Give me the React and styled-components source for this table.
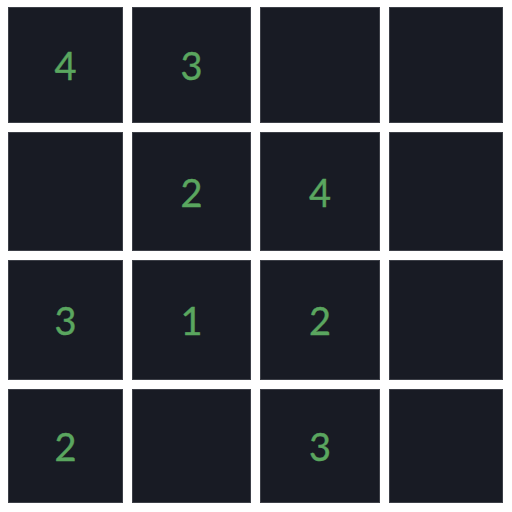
import React from 'react';
import styled, { createGlobalStyle } from 'styled-components';

const GlobalStyle = createGlobalStyle`
    html, body {
        margin: 0;
        padding: 0;
        background: #fff;
    }
`;

const Board = styled.div`
    display: grid;
    grid-template-columns: 115px 119px 120px 114px;
    grid-template-rows: 116px 119px 120px 114px;
    gap: 9px;
    padding: 7px 0 0 8px;
    width: 512px;
    height: 512px;
    box-sizing: border-box;
`;

const Cell = styled.div`
    display: flex;
    align-items: center;
    justify-content: center;
    background: #181b24;
    border: 1px solid #3c3f47;
    box-sizing: border-box;
    color: #5aa65f;
    font-family: Lato, 'Open Sans', sans-serif;
    font-size: 38px;
    line-height: 1;
    -webkit-text-stroke: 0.4px #5aa65f;
`;

const values = [
    [4, 3, null, null],
    [null, 2, 4, null],
    [3, 1, 2, null],
    [2, null, 3, null],
];

export default function App() {
    return (
        <>
            <GlobalStyle />
            <Board>
                {values.map((row, r) =>
                    row.map((v, c) => <Cell key={`${r}-${c}`}>{v}</Cell>)
                )}
            </Board>
        </>
    );
}
